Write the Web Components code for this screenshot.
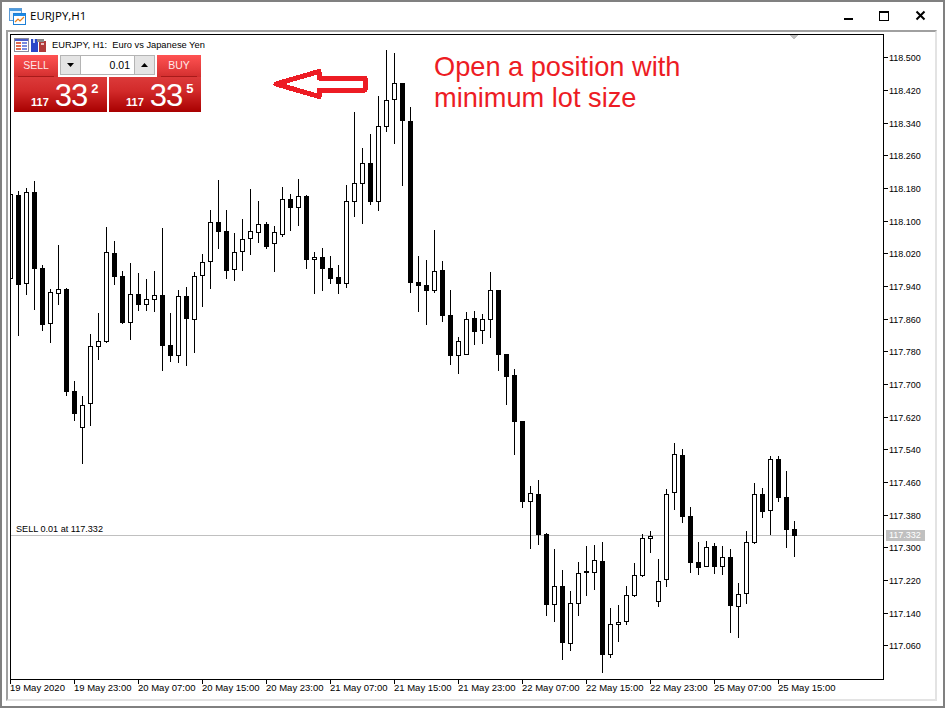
<!DOCTYPE html>
<html>
<head>
<meta charset="utf-8">
<title>EURJPY,H1</title>
<style>
  html, body { margin: 0; padding: 0; background: #fff; }
  body { font-family: "Liberation Sans", Arial, sans-serif; }
</style>
</head>
<body>
<terminal-window caption="EURJPY,H1">
  <chart-frame>
    <candle-chart>
      <chart-heading>EURJPY, H1:&nbsp; Euro vs Japanese Yen</chart-heading>
      <one-click-panel></one-click-panel>
      <chart-note></chart-note>
    </candle-chart>
  </chart-frame>
</terminal-window>

<script>
// [high, low, bodyTop, bodyBottom, filled] one row per bar, 8px apart, in page pixels
const BARS = [
  [184,335,194,279,0],[191,336,195,285,1],[188,295,192,284,0],[181,310,192,269,1],
  [265,331,268,325,1],[289,343,292,324,0],[245,305,289,294,0],[288,396,289,392,1],
  [381,421,391,414,1],[396,464,405,428,0],[334,426,346,404,0],[313,360,341,347,0],
  [227,343,252,342,0],[241,285,253,277,1],[271,324,276,323,1],[263,340,294,323,0],
  [273,311,294,305,1],[279,311,299,305,0],[271,312,295,300,0],[228,371,295,346,1],
  [313,362,345,356,1],[290,363,296,356,0],[287,366,296,319,1],[272,353,276,320,0],
  [254,307,262,276,0],[210,289,222,262,0],[180,249,222,232,1],[210,279,231,271,1],
  [233,281,252,270,0],[219,271,239,252,0],[189,255,231,239,0],[201,243,224,233,0],
  [222,249,224,247,1],[226,272,232,244,0],[187,237,199,235,0],[194,231,199,208,1],
  [179,226,196,208,0],[195,269,196,260,1],[252,294,257,260,0],[248,291,257,269,1],
  [256,284,268,279,1],[265,294,277,284,1],[185,288,201,284,0],[112,217,183,202,0],
  [148,224,163,184,0],[134,205,163,202,1],[96,211,126,202,0],[50,132,100,127,0],
  [53,144,83,100,0],[83,186,83,121,1],[107,293,121,283,1],[256,312,282,286,1],
  [260,325,285,291,1],[230,293,271,291,0],[261,322,270,316,1],[290,365,315,356,1],
  [337,374,341,356,0],[312,355,319,355,0],[311,345,318,332,1],[314,344,319,331,0],
  [272,338,290,320,0],[290,371,290,355,1],[354,405,354,377,1],[369,455,375,422,1],
  [421,508,421,502,1],[486,549,493,502,0],[480,545,494,535,1],[533,616,534,605,1],
  [549,622,586,605,0],[570,660,586,643,1],[591,651,603,644,0],[562,616,573,604,0],
  [546,596,571,573,0],[545,590,560,573,0],[542,673,561,655,1],[608,658,624,655,0],
  [605,642,622,625,0],[586,625,595,622,0],[563,597,575,596,0],[534,577,538,576,0],
  [531,553,536,539,0],[559,607,581,602,0],[489,587,494,580,0],[443,510,454,493,0],
  [449,523,455,517,1],[507,573,516,563,1],[542,575,562,568,1],[541,567,547,567,0],
  [543,574,546,567,1],[546,575,557,567,0],[549,633,557,606,1],[583,638,594,607,0],
  [531,604,542,594,0],[483,544,494,543,0],[488,518,494,512,1],[456,535,459,511,0],
  [456,502,459,498,1],[471,548,497,530,1],[521,557,529,536,1]
];

const PRICES = ['118.500','118.420','118.340','118.260','118.180','118.100','118.020','117.940','117.860','117.780',
  '117.700','117.620','117.540','117.460','117.380','117.300','117.220','117.140','117.060'];

const TIMES = ['19 May 2020','19 May 23:00','20 May 07:00','20 May 15:00','20 May 23:00','21 May 07:00','21 May 15:00',
  '21 May 23:00','22 May 07:00','22 May 15:00','22 May 23:00','25 May 07:00','25 May 15:00'];

class TerminalWindow extends HTMLElement {
  constructor() {
    super();
    this.attachShadow({ mode: 'open' });
  }

  connectedCallback() {
    this.shadowRoot.innerHTML = `
      <style>
        :host {
          display: flex;
          flex-direction: column;
          box-sizing: border-box;
          width: 945px;
          height: 708px;
          border: 2px solid #808080;
          background: #fff;
        }
        .title {
          display: flex;
          align-items: center;
          gap: 4px;
          height: 28px;
          padding-left: 7px;
          flex: none;
        }
        .caption {
          font: 11.5px "Open Sans", "Liberation Sans", sans-serif;
          color: #000;
          position: relative;
          top: -1px;
        }
        .buttons {
          margin-left: auto;
          margin-right: 5px;
          display: flex;
        }
        .buttons svg { display: block; width: 36px; height: 28px; }
        .frame {
          flex: none;
          box-sizing: border-box;
          margin: 0 6px 0 4px;
          height: 671px;
          border: 2px solid;
          border-color: #a0a0a0 #e3e3e3 #e3e3e3 #a0a0a0;
          padding: 2px;
        }
      </style>
      <div class="title">
        <svg width="17" height="17" viewBox="0 0 17 17" shape-rendering="crispEdges">
          <rect x="0.5" y="0.5" width="12" height="12" fill="#e8f2fb" stroke="#5c9bd6"/>
          <rect x="1" y="1" width="11" height="2" fill="#4a9be0"/>
          <rect x="4.5" y="5.5" width="12" height="11" fill="#fff" stroke="#1c7fd6"/>
          <rect x="5" y="6" width="11" height="2" fill="#1c8ae6"/>
          <polyline points="6,14 9,11 11,13 15,9" fill="none" stroke="#e8801a" stroke-width="1.2" shape-rendering="auto"/>
        </svg>
        <span class="caption">${this.getAttribute('caption')}</span>
        <div class="buttons">
          <svg viewBox="0 0 36 28" shape-rendering="crispEdges"><rect x="14" y="16" width="9" height="2" fill="#000"/></svg>
          <svg viewBox="0 0 36 28" shape-rendering="crispEdges"><rect x="13.5" y="9.5" width="9" height="9" fill="none" stroke="#000"/><rect x="13" y="9" width="10" height="2" fill="#000"/></svg>
          <svg viewBox="0 0 36 28"><path d="M14.5 9.5L22.5 17.5M22.5 9.5L14.5 17.5" stroke="#000" stroke-width="2" fill="none"/></svg>
        </div>
      </div>
      <div class="frame"><slot></slot></div>
    `;
  }
}

class ChartFrame extends HTMLElement {
  constructor() {
    super();
    this.attachShadow({ mode: 'open' });
  }

  connectedCallback() {
    this.shadowRoot.innerHTML = `
      <style>
        :host {
          display: grid;
          grid-template-columns: 874px 1fr;
          grid-template-rows: 646px 1fr;
          height: 100%;
        }
      </style>
      <slot></slot>
      <price-axis></price-axis>
      <time-axis></time-axis>
    `;
  }
}

class CandleChart extends HTMLElement {
  constructor() {
    super();
    this.attachShadow({ mode: 'open' });
  }

  connectedCallback() {
    let bars = '';
    BARS.forEach(([high, low, top, bottom, filled], i) => {
      const x = 10 + i * 8;
      bars += `<rect x="${x}" y="${high}" width="1" height="${low - high}"/>`;
      bars += `<rect x="${x - 2}" y="${top}" width="5" height="${bottom - top}"/>`;
      if (!filled) bars += `<rect x="${x - 1}" y="${top + 1}" width="3" height="${bottom - top - 2}" fill="#fff"/>`;
    });

    // viewBox keeps page coordinates, so the bars read as they do on the screen
    this.shadowRoot.innerHTML = `
      <style>
        :host {
          display: block;
          position: relative;
          box-sizing: border-box;
          border: 1px solid #000;
          background: #fff;
          overflow: hidden;
        }
        svg { display: block; width: 872px; height: 644px; }
      </style>
      <svg viewBox="11 35 872 644" shape-rendering="crispEdges">
        <rect x="11" y="535" width="872" height="1" fill="#c0c0c0"/>
        <g fill="#000">${bars}</g>
        <polygon points="790,35 798,35 794,40" fill="#c0c0c0"/>
        <polygon points="276,84 319,71.5 319,78 365,78 365,90 319,90 319,96.5" fill="#fff" stroke="#ed1c24" stroke-width="5" stroke-linejoin="round"/>
      </svg>
      <slot></slot>
      <position-label>SELL 0.01 at 117.332</position-label>
    `;
  }
}

class PositionLabel extends HTMLElement {
  constructor() {
    super();
    this.attachShadow({ mode: 'open' });
    this.shadowRoot.innerHTML = `
      <style>
        :host {
          position: absolute;
          left: 5px;
          top: 488px;
          font: 9.1px/12px "Liberation Sans", sans-serif;
          color: #000;
          white-space: nowrap;
        }
      </style>
      <slot></slot>
    `;
  }
}

class ChartHeading extends HTMLElement {
  constructor() {
    super();
    this.attachShadow({ mode: 'open' });
    this.shadowRoot.innerHTML = `
      <style>
        :host {
          position: absolute;
          left: 3px;
          top: 3px;
          display: flex;
          align-items: center;
          height: 14px;
          font: 9.3px/14px "Liberation Sans", sans-serif;
          color: #000;
          white-space: nowrap;
        }
        svg { display: block; margin-right: 2px; }
        svg:last-of-type { margin-right: 6px; }
      </style>
      <svg width="15" height="14" viewBox="0 0 15 14" shape-rendering="crispEdges">
        <rect x="0.5" y="0.5" width="14" height="13" fill="#fff" stroke="#8a8a9a"/>
        <rect x="1" y="1" width="13" height="2" fill="#4a5cc8"/>
        <rect x="2" y="4" width="5" height="2" fill="#e06a50"/>
        <rect x="8" y="4" width="5" height="2" fill="#7a8ce0"/>
        <rect x="2" y="7" width="5" height="2" fill="#e06a50"/>
        <rect x="8" y="7" width="5" height="2" fill="#7a8ce0"/>
        <rect x="2" y="10" width="5" height="2" fill="#e06a50"/>
        <rect x="8" y="10" width="5" height="2" fill="#7a8ce0"/>
      </svg>
      <svg width="15" height="14" viewBox="0 0 15 14" shape-rendering="crispEdges">
        <polygon points="0,1 5,1 7,3 7,14 0,14" fill="#2a46c8"/>
        <rect x="2" y="1" width="2" height="4" fill="#c8d4f4"/>
        <polygon points="8,3 15,3 15,14 8,14" fill="#b03a3a"/>
        <rect x="6" y="1" width="7" height="3" fill="#8a8a8a"/>
        <rect x="10" y="5" width="3" height="2" fill="#e8c0c0"/>
      </svg>
      <span><slot></slot></span>
    `;
  }
}

class PriceAxis extends HTMLElement {
  constructor() {
    super();
    this.attachShadow({ mode: 'open' });
  }

  connectedCallback() {
    const rows = PRICES.map(p => `<div class="row"><span>${p}</span></div>`).join('');
    this.shadowRoot.innerHTML = `
      <style>
        :host {
          display: block;
          position: relative;
          box-sizing: border-box;
          padding-top: 7.67px;
          font: 9px/1 "Liberation Sans", sans-serif;
          color: #000;
        }
        .row {
          display: flex;
          align-items: center;
          gap: 1px;
          height: 32.67px;
        }
        .row::before {
          content: '';
          width: 4px;
          height: 1px;
          background: #000;
        }
        .row span { padding-top: 2px; }
        .current {
          position: absolute;
          left: 2px;
          top: 496px;
          width: 39px;
          height: 11px;
          box-sizing: border-box;
          padding-left: 3px;
          line-height: 11px;
          background: #c0c0c0;
          color: #fff;
        }
      </style>
      ${rows}
      <div class="current">117.332</div>
    `;
  }
}

class TimeAxis extends HTMLElement {
  constructor() {
    super();
    this.attachShadow({ mode: 'open' });
  }

  connectedCallback() {
    const cells = TIMES.map(t => `<div class="cell">${t}</div>`).join('');
    this.shadowRoot.innerHTML = `
      <style>
        :host {
          display: grid;
          grid-template-columns: repeat(13, 64px);
          font: 9.5px/12px "Liberation Sans", sans-serif;
          color: #000;
          grid-column: 1 / -1;
        }
        .cell {
          position: relative;
          padding-top: 2px;
          white-space: nowrap;
        }
        .cell::before {
          content: '';
          position: absolute;
          left: 0;
          top: 0;
          width: 1px;
          height: 4px;
          background: #000;
        }
      </style>
      ${cells}
    `;
  }
}

class QuoteBox extends HTMLElement {
  constructor() {
    super();
    this.attachShadow({ mode: 'open' });
  }

  connectedCallback() {
    const [big, mid, small] = this.getAttribute('quote').split(' ');
    this.shadowRoot.innerHTML = `
      <style>
        :host {
          display: flex;
          align-items: flex-start;
          box-sizing: border-box;
          height: 35px;
          padding-left: 17px;
          background: linear-gradient(#dc3a3a, #d22a2a 40%, #a80000);
          color: #fff;
          font-family: "Liberation Sans", sans-serif;
        }
        .big { font-size: 11px; font-weight: bold; line-height: 13px; margin-top: 19px; }
        .mid { font-size: 31px; line-height: 31px; letter-spacing: -1px; margin: 3px 0 0 6px; }
        .small { font-size: 13px; font-weight: bold; line-height: 13px; margin: 5px 0 0 4px; }
      </style>
      <span class="big">${big}</span><span class="mid">${mid}</span><span class="small">${small}</span>
    `;
  }
}

class OneClickPanel extends HTMLElement {
  constructor() {
    super();
    this.attachShadow({ mode: 'open' });
    this.shadowRoot.innerHTML = `
      <style>
        :host {
          position: absolute;
          left: 3px;
          top: 20px;
          width: 187px;
          display: grid;
          grid-template-columns: 93px 92px;
          column-gap: 2px;
          font-family: "Liberation Sans", sans-serif;
        }
        .top {
          grid-column: 1 / -1;
          display: flex;
          justify-content: space-between;
          height: 22px;
          background: #fff;
        }
        .side {
          width: 44px;
          box-sizing: border-box;
          padding: 0 4px;
          background: linear-gradient(#ff5252, #e13a3a 70%, #d22e2e);
          color: #ffe8e8;
          font-size: 10.5px;
          text-align: center;
        }
        .side span {
          display: block;
          height: 21px;
          line-height: 21px;
          border-bottom: 1px solid #a81a1a;
        }
        .lot {
          display: flex;
          box-sizing: border-box;
          width: 95px;
          height: 20px;
          border: 1px solid #b4b4b4;
          background: #fff;
          font-size: 10.5px;
          color: #000;
        }
        .step {
          width: 19px;
          background: #e4e4e4;
          display: flex;
          align-items: center;
          justify-content: center;
          flex: none;
        }
        .value {
          flex: 1;
          text-align: right;
          line-height: 18px;
          padding-right: 4px;
          border-left: 1px solid #b4b4b4;
          border-right: 1px solid #b4b4b4;
        }
      </style>
      <div class="top">
        <div class="side"><span>SELL</span></div>
        <div class="lot">
          <div class="step"><svg width="7" height="4" viewBox="0 0 7 4"><polygon points="0,0 7,0 3.5,4" fill="#000"/></svg></div>
          <div class="value">0.01</div>
          <div class="step"><svg width="7" height="4" viewBox="0 0 7 4"><polygon points="0,4 7,4 3.5,0" fill="#000"/></svg></div>
        </div>
        <div class="side"><span>BUY</span></div>
      </div>
      <quote-box quote="117 33 2"></quote-box>
      <quote-box quote="117 33 5"></quote-box>
    `;
  }
}

class ChartNote extends HTMLElement {
  constructor() {
    super();
    this.attachShadow({ mode: 'open' });
    this.shadowRoot.innerHTML = `
      <style>
        :host {
          position: absolute;
          left: 423px;
          top: 16px;
          font: 27.2px/31px "Liberation Sans", sans-serif;
          color: #ed1c24;
          white-space: nowrap;
        }
      </style>
      Open a position with<br>minimum lot size
    `;
  }
}

customElements.define('terminal-window', TerminalWindow);
customElements.define('chart-frame', ChartFrame);
customElements.define('candle-chart', CandleChart);
customElements.define('position-label', PositionLabel);
customElements.define('chart-heading', ChartHeading);
customElements.define('price-axis', PriceAxis);
customElements.define('time-axis', TimeAxis);
customElements.define('quote-box', QuoteBox);
customElements.define('one-click-panel', OneClickPanel);
customElements.define('chart-note', ChartNote);
</script>
</body>
</html>
